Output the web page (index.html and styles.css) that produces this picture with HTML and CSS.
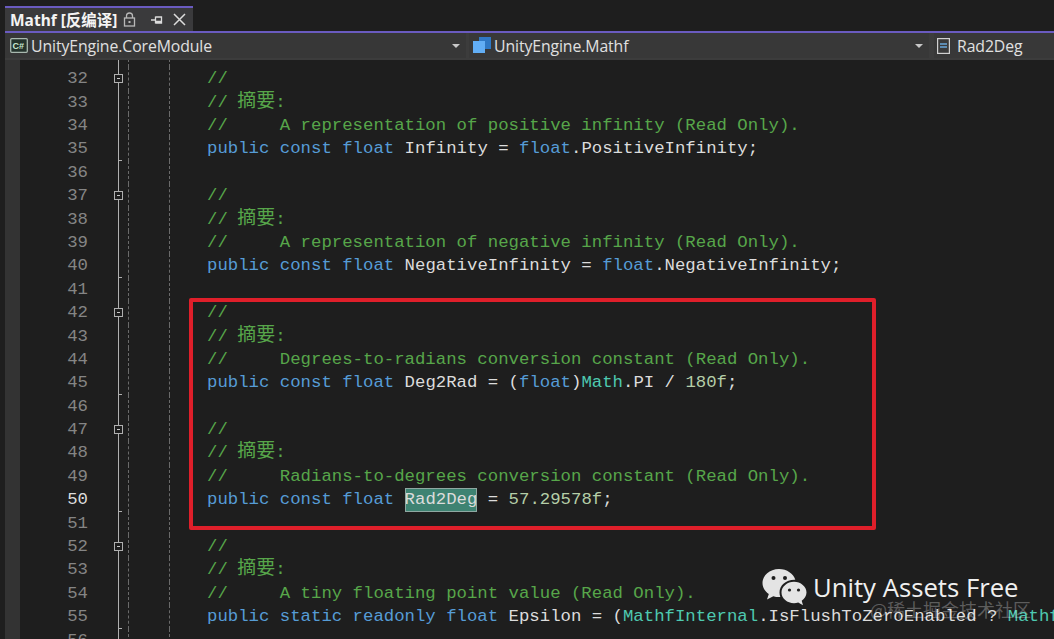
FILE: index.html
```html
<!DOCTYPE html>
<html lang="zh">
<head>
<meta charset="utf-8">
<title>Mathf</title>
<link rel="stylesheet" href="styles.css">
</head>
<body>
<div class="tabwell">
  <div class="tab">
    <span class="tab-title">Mathf [反编译]</span>
    <svg class="tab-lock" width="13" height="15" viewBox="0 0 13 15"><path d="M3.500 6V4a3 3 0 0 1 6 0v2" fill="none" stroke="#b8b8b8" stroke-width="1.300"/><rect x="1.500" y="6" width="10" height="8" fill="none" stroke="#b8b8b8" stroke-width="1.300"/><rect x="5.500" y="9" width="2" height="2" fill="#b8b8b8"/></svg>
    <svg class="tab-pin" width="12" height="12" viewBox="0 0 12 12"><path d="M0 6h4M4.500 2.500v7M4.500 3h6v6h-6M4.500 7.500h6" fill="none" stroke="#dcdcdc" stroke-width="1.300"/></svg>
    <svg class="tab-close" width="13" height="13" viewBox="0 0 13 13"><path d="M1 1l11 11M12 1L1 12" stroke="#dcdcdc" stroke-width="1.500"/></svg>
  </div>
</div>
<div class="navbar">
  <div class="combo combo-a">
    <svg class="nav-icon" width="18" height="15" viewBox="0 0 18 15"><rect x="0.700" y="0.700" width="16.600" height="13.600" rx="1" fill="#24332c" stroke="#a8b8ae" stroke-width="1.300"/><text x="2.500" y="11" class="cs-glyph">C#</text></svg>
    <span class="nav-text">UnityEngine.CoreModule</span>
    <span class="arrow"></span>
  </div>
  <div class="combo combo-b">
    <svg class="nav-icon" width="18" height="17" viewBox="0 0 18 17"><rect x="6" y="0" width="12" height="12" fill="#2f78c4"/><rect x="0" y="4" width="12" height="12" fill="#62aef5"/></svg>
    <span class="nav-text">UnityEngine.Mathf</span>
    <span class="arrow"></span>
  </div>
  <div class="combo combo-c">
    <svg class="nav-icon" width="13" height="16" viewBox="0 0 13 16"><rect x="0.600" y="0.600" width="11.800" height="14.800" fill="#3a3a3a" stroke="#d0d0d0" stroke-width="1.200"/><path d="M3 6h7M3 9h7" stroke="#6aa8dc" stroke-width="1.400"/></svg>
    <span class="nav-text">Rad2Deg</span>
  </div>
</div>
<div class="editor">
  <div class="strip"></div>
  <div class="lines">
    <div class="row row-first"><span class="ln">31</span><span class="fold"></span><span class="code"><span class="guide"></span></span></div>
    <div class="row"><span class="ln">32</span><span class="fold"><i class="box"></i></span><span class="code"><span class="guide"></span><span class="c">//</span></span></div>
    <div class="row"><span class="ln">33</span><span class="fold"></span><span class="code"><span class="guide"></span><span class="c">// <span class="zh">摘要</span>:</span></span></div>
    <div class="row"><span class="ln">34</span><span class="fold"></span><span class="code"><span class="guide"></span><span class="c">//     A representation of positive infinity (Read Only).</span></span></div>
    <div class="row"><span class="ln">35</span><span class="fold end"></span><span class="code"><span class="guide"></span><span class="k">public const float</span> Infinity = <span class="k">float</span>.PositiveInfinity;</span></div>
    <div class="row"><span class="ln">36</span><span class="fold"></span><span class="code"><span class="guide"></span></span></div>
    <div class="row"><span class="ln">37</span><span class="fold"><i class="box"></i></span><span class="code"><span class="guide"></span><span class="c">//</span></span></div>
    <div class="row"><span class="ln">38</span><span class="fold"></span><span class="code"><span class="guide"></span><span class="c">// <span class="zh">摘要</span>:</span></span></div>
    <div class="row"><span class="ln">39</span><span class="fold"></span><span class="code"><span class="guide"></span><span class="c">//     A representation of negative infinity (Read Only).</span></span></div>
    <div class="row"><span class="ln">40</span><span class="fold end"></span><span class="code"><span class="guide"></span><span class="k">public const float</span> NegativeInfinity = <span class="k">float</span>.NegativeInfinity;</span></div>
    <div class="row"><span class="ln">41</span><span class="fold"></span><span class="code"><span class="guide"></span></span></div>
    <div class="row"><span class="ln">42</span><span class="fold"><i class="box"></i></span><span class="code"><span class="guide"></span><span class="c">//</span></span></div>
    <div class="row"><span class="ln">43</span><span class="fold"></span><span class="code"><span class="guide"></span><span class="c">// <span class="zh">摘要</span>:</span></span></div>
    <div class="row"><span class="ln">44</span><span class="fold"></span><span class="code"><span class="guide"></span><span class="c">//     Degrees-to-radians conversion constant (Read Only).</span></span></div>
    <div class="row"><span class="ln">45</span><span class="fold end"></span><span class="code"><span class="guide"></span><span class="k">public const float</span> Deg2Rad = (<span class="k">float</span>)<span class="t">Math</span>.PI / <span class="n">180f</span>;</span></div>
    <div class="row"><span class="ln">46</span><span class="fold"></span><span class="code"><span class="guide"></span></span></div>
    <div class="row"><span class="ln">47</span><span class="fold"><i class="box"></i></span><span class="code"><span class="guide"></span><span class="c">//</span></span></div>
    <div class="row"><span class="ln">48</span><span class="fold"></span><span class="code"><span class="guide"></span><span class="c">// <span class="zh">摘要</span>:</span></span></div>
    <div class="row"><span class="ln">49</span><span class="fold"></span><span class="code"><span class="guide"></span><span class="c">//     Radians-to-degrees conversion constant (Read Only).</span></span></div>
    <div class="row"><span class="ln ln-current">50</span><span class="fold end"></span><span class="code"><span class="guide"></span><span class="k">public const float</span> <span class="sel">Rad2Deg</span> = <span class="n">57.29578f</span>;</span></div>
    <div class="row"><span class="ln">51</span><span class="fold"></span><span class="code"><span class="guide"></span></span></div>
    <div class="row"><span class="ln">52</span><span class="fold"><i class="box"></i></span><span class="code"><span class="guide"></span><span class="c">//</span></span></div>
    <div class="row"><span class="ln">53</span><span class="fold"></span><span class="code"><span class="guide"></span><span class="c">// <span class="zh">摘要</span>:</span></span></div>
    <div class="row"><span class="ln">54</span><span class="fold"></span><span class="code"><span class="guide"></span><span class="c">//     A tiny floating point value (Read Only).</span></span></div>
    <div class="row"><span class="ln">55</span><span class="fold end"></span><span class="code"><span class="guide"></span><span class="k">public static readonly float</span> Epsilon = (<span class="t">MathfInternal</span>.IsFlushToZeroEnabled ? <span class="t">MathfInternal</span>.FloatMinNormal : <span class="t">MathfInternal</span>.FloatMinDenormal);</span></div>
    <div class="row"><span class="ln">56</span><span class="fold"></span><span class="code"><span class="guide"></span></span></div>
  </div>
</div>
<div class="redbox"></div>
<div class="wm">
  <svg class="wm-icon" width="45" height="40" viewBox="0 0 45 40"><path d="M17 1C7.500 1 0.500 7.500 0.500 15c0 4.500 2.500 8.300 6.300 11L5 31.500l6.300-3.300c2 .6 3.700.9 5.700.9h1.300C17.800 27.500 17.500 26 17.500 24.500c0-7 6.500-12.700 14.800-12.700h1C31.500 5.800 25 1 17 1z" fill="#e4e4e4"/><path d="M44.500 24.500c0-6-5.800-10.800-12.500-10.800S19.500 18.500 19.500 24.500 25.300 35.200 32 35.200c1.500 0 2.800-.3 4.200-.7l4.800 2.700-1.300-4.500c3-2.200 4.800-5 4.800-8.200z" fill="#e4e4e4"/><circle cx="11.500" cy="10" r="2" fill="#1e1e1e"/><circle cx="23" cy="10" r="2" fill="#1e1e1e"/><circle cx="27.500" cy="22" r="1.600" fill="#1e1e1e"/><circle cx="36.500" cy="22" r="1.600" fill="#1e1e1e"/></svg>
  <span class="wm-text">Unity Assets Free</span>
</div>
<div class="wm-sub">@稀土掘金技术社区</div>
</body>
</html>
```
FILE: styles.css
```css
html, body {
  margin: 0;
  height: 100%;
  overflow: hidden;
  background: #1e1e1e;
}
body {
  display: flex;
  flex-direction: column;
  width: 1054px;
  height: 639px;
  position: relative;
  font-family: "Open Sans", "Noto Sans", "Noto Sans CJK SC", sans-serif;
  color: #dcdcdc;
}
.tabwell {
  height: 31px;
  padding: 6px 0 0 5px;
  box-sizing: border-box;
  flex: none;
}
.tab {
  width: 188px;
  height: 25px;
  box-sizing: border-box;
  border-top: 2px solid #6a5bc0;
  background: #3a3a3c;
  display: flex;
  align-items: center;
  padding-left: 5px;
}
.tab-title {
  font-size: 15.500px;
  font-weight: 700;
  color: #f4f4f4;
  white-space: nowrap;
  width: 113px;
  font-family: "Noto Sans", "Noto Sans CJK SC", sans-serif;
}
.tab-lock { margin-left: 0; }
.tab-pin { margin-left: 15px; }
.tab-close { margin-left: 10px; }
.navbar {
  flex: none;
  height: 29px;
  margin-left: 5px;
  box-sizing: border-box;
  border-top: 2px solid #6a5bc0;
  background: #3c3c3c;
  display: flex;
}
.combo {
  display: flex;
  align-items: center;
  position: relative;
  height: 25px;
  flex: none;
}
.combo-a { width: 461px; padding-left: 5px; box-sizing: border-box; background: #373737; }
.combo-b { width: 460px; margin-left: 3px; padding-left: 4px; box-sizing: border-box; background: #383838; }
.combo-c { margin-left: 5px; padding-left: 3px; background: #383838; flex: 1; }
.nav-icon { flex: none; }
.nav-text {
  font-size: 15.800px;
  color: #e0e0e0;
  margin-left: 3px;
  white-space: nowrap;
  letter-spacing: -0.100px;
}
.combo-c .nav-text { margin-left: 7px; }
.cs-glyph {
  font: 700 9px "Liberation Sans", sans-serif;
  fill: #c8e8d0;
}
.arrow {
  position: absolute;
  right: 6px;
  top: 11px;
  width: 0;
  height: 0;
  border: 4px solid transparent;
  border-top: 4px solid #c8c8c8;
  border-bottom: 0;
}
.editor {
  flex: 1;
  min-height: 0;
  display: flex;
  overflow: hidden;
}
.strip {
  flex: none;
  width: 15px;
  margin-left: 5px;
  background: #333333;
}
.lines {
  flex: 1;
  min-width: 0;
  overflow: hidden;
  font-family: "Liberation Mono", "Noto Sans CJK SC", monospace;
  font-size: 17.330px;
  line-height: 23.400px;
}
.row {
  display: flex;
  height: 23.400px;
  white-space: pre;
}
.row-first { margin-top: -16.200px; }
.ln {
  flex: none;
  width: 68px;
  text-align: right;
  color: #858585;
}
.ln-current { color: #dcdcdc; }
.fold {
  flex: none;
  width: 40px;
  height: 100%;
  display: flex;
  align-items: center;
  position: relative;
  background: linear-gradient(#b0b0b0, #b0b0b0) no-repeat 30px 0 / 1px 100%;
}
.fold.end::after {
  content: "";
  position: absolute;
  left: 30px;
  bottom: 0;
  width: 4px;
  height: 1px;
  background: #b0b0b0;
}
.box {
  display: block;
  width: 7px;
  height: 7px;
  margin-left: 26px;
  box-sizing: content-box;
  border: 1px solid #b0b0b0;
  background: linear-gradient(#c8c8c8, #c8c8c8) no-repeat center / 3px 1px #1e1e1e;
}
.code {
  flex: 1;
  min-width: 0;
  height: 100%;
  border-left: 1px dashed #6a6a6a;
  box-sizing: border-box;
  color: #dcdcdc;
  overflow: hidden;
}
.guide {
  display: inline-block;
  vertical-align: top;
  width: 40px;
  height: 100%;
  margin-right: 37px;
  border-right: 1px dashed #6a6a6a;
}
.c { color: #57a64a; }
.zh { font-family: "Noto Sans CJK SC", sans-serif; font-size: 19px; line-height: 0; margin-left: -1px; }
.k { color: #569cd6; }
.t { color: #4ec9b0; }
.n { color: #b5cea8; }
.sel {
  background: #3e8372;
  outline: 1px solid #8fa8a2;
  outline-offset: -1px;
  display: inline-block;
  height: 100%;
}
.redbox {
  position: absolute;
  left: 189px;
  top: 298px;
  width: 687px;
  height: 232px;
  box-sizing: border-box;
  border: 4px solid #df1f2a;
  border-radius: 2px;
}
.wm {
  position: absolute;
  left: 762px;
  top: 568px;
  display: flex;
  align-items: center;
  color: #f0f0f0;
}
.wm-text {
  font-family: "Open Sans", sans-serif;
  font-size: 25.700px;
  margin-left: 6px;
  white-space: nowrap;
  margin-top: -1px;
}
.wm-sub {
  position: absolute;
  left: 870px;
  top: 596px;
  font-family: "Noto Sans CJK SC", sans-serif;
  font-size: 18px;
  color: rgba(255, 255, 255, 0.28);
  white-space: nowrap;
}
```
